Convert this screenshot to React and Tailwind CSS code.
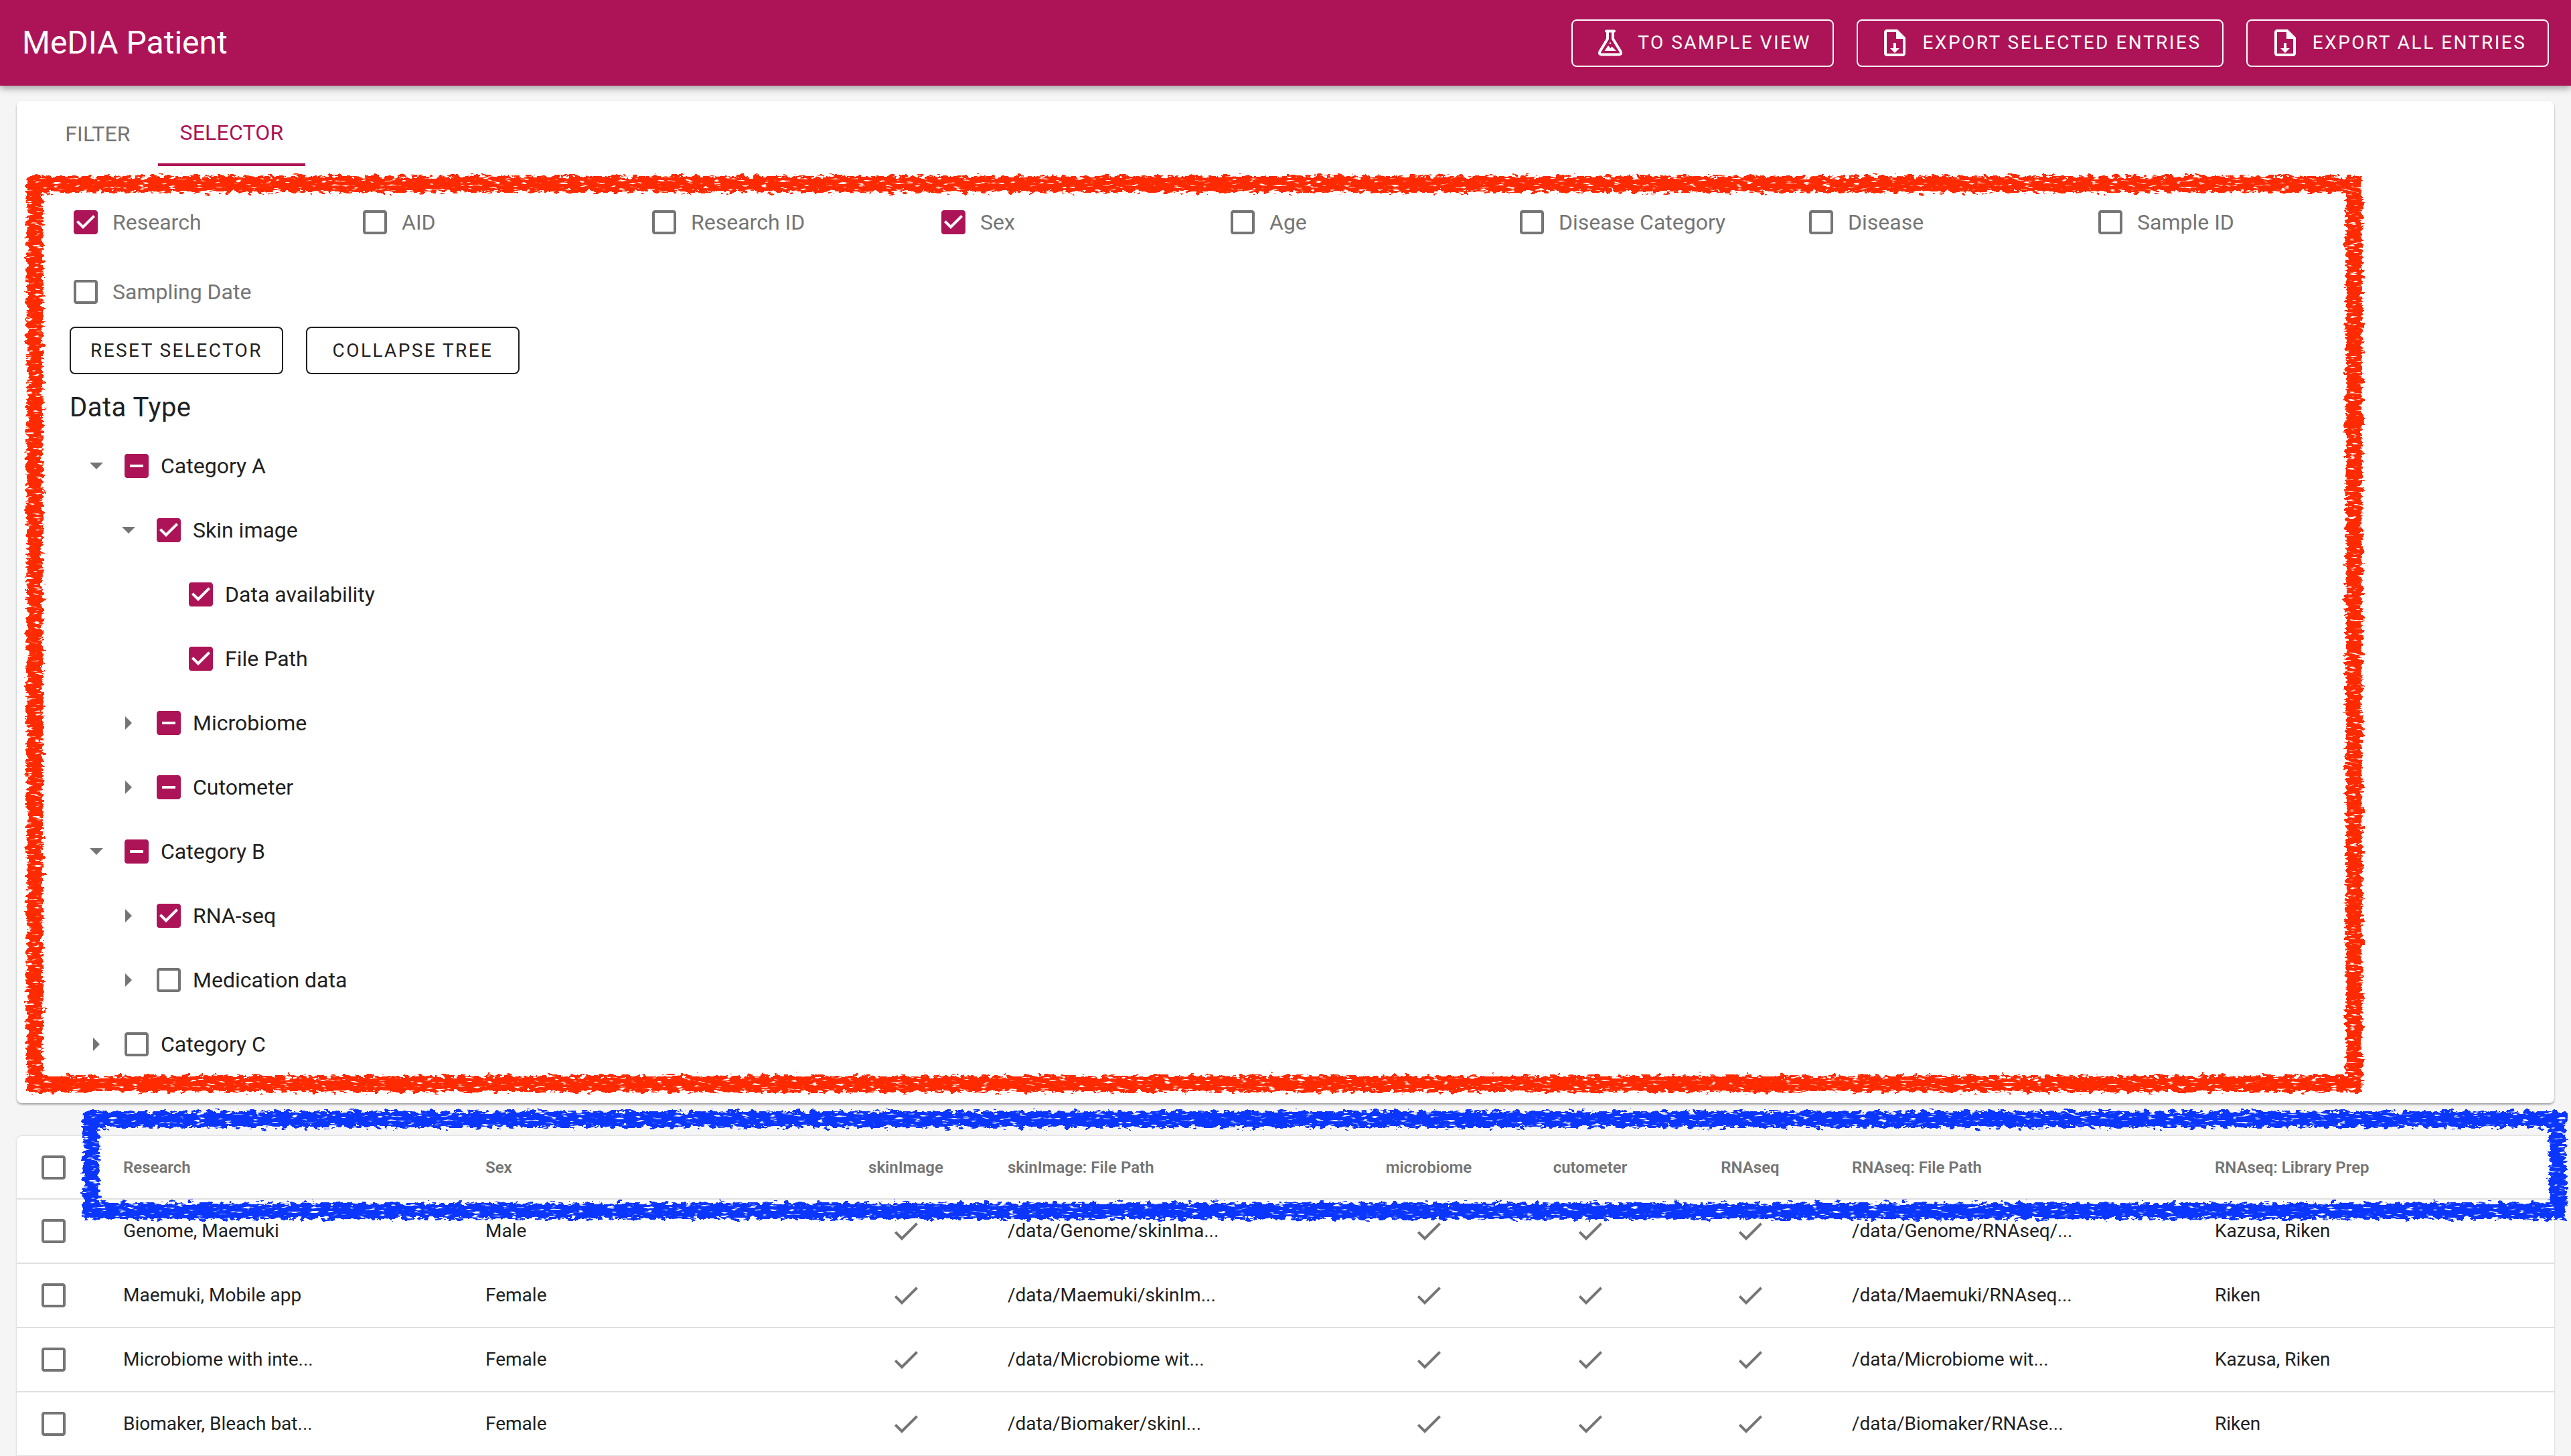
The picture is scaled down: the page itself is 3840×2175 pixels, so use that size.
import React from 'react';

const crimson = 'text-[#ad1457]';

const selectorFields = [
  { label: 'Research', checked: true },
  { label: 'AID' },
  { label: 'Research ID' },
  { label: 'Sex', checked: true },
  { label: 'Age' },
  { label: 'Disease Category' },
  { label: 'Disease' },
  { label: 'Sample ID' },
  { label: 'Sampling Date' },
];

const treeRows = [
  { label: 'Category A', depth: 0, arrow: 'down', state: 'some' },
  { label: 'Skin image', depth: 1, arrow: 'down', state: 'all' },
  { label: 'Data availability', depth: 2, state: 'all' },
  { label: 'File Path', depth: 2, state: 'all' },
  { label: 'Microbiome', depth: 1, arrow: 'right', state: 'some' },
  { label: 'Cutometer', depth: 1, arrow: 'right', state: 'some' },
  { label: 'Category B', depth: 0, arrow: 'down', state: 'some' },
  { label: 'RNA-seq', depth: 1, arrow: 'right', state: 'all' },
  { label: 'Medication data', depth: 1, arrow: 'right', state: 'none' },
  { label: 'Category C', depth: 0, arrow: 'right', state: 'none' },
];

const tableRows = [
  ['Genome, Maemuki', 'Male', '/data/Genome/skinIma...', '/data/Genome/RNAseq/...', 'Kazusa, Riken'],
  ['Maemuki, Mobile app', 'Female', '/data/Maemuki/skinIm...', '/data/Maemuki/RNAseq...', 'Riken'],
  ['Microbiome with inte...', 'Female', '/data/Microbiome wit...', '/data/Microbiome wit...', 'Kazusa, Riken'],
  ['Biomaker, Bleach bat...', 'Female', '/data/Biomaker/skinI...', '/data/Biomaker/RNAse...', 'Riken'],
];

const gridCols = 'grid grid-cols-[159px_541px_508px_240px_551px_220px_262px_216px_586px_507px] items-center';

const Box = ({ state = 'none' }) => {
  if (state === 'none') {
    return (
      <svg viewBox="0 0 24 24" className="w-12 h-12 shrink-0 fill-[#757575]">
        <path d="M19 5v14H5V5h14m0-2H5c-1.1 0-2 .9-2 2v14c0 1.1.9 2 2 2h14c1.1 0 2-.9 2-2V5c0-1.1-.9-2-2-2z" />
      </svg>
    );
  }
  return (
    <svg viewBox="0 0 24 24" className="w-12 h-12 shrink-0 fill-[#ad1457]">
      {state === 'all' ? (
        <path d="M19 3H5c-1.11 0-2 .9-2 2v14c0 1.1.89 2 2 2h14c1.11 0 2-.9 2-2V5c0-1.1-.89-2-2-2zm-9 14l-5-5 1.41-1.41L10 14.17l7.59-7.59L19 8l-9 9z" />
      ) : (
        <path d="M19 3H5c-1.1 0-2 .9-2 2v14c0 1.1.9 2 2 2h14c1.1 0 2-.9 2-2V5c0-1.1-.9-2-2-2zm-2 10H7v-2h10v2z" />
      )}
    </svg>
  );
};

const FlaskIcon = () => (
  <svg viewBox="0 0 48 48" className="w-12 h-12">
    <path
      d="M18 6.5H30M28 7V18L39.5 37Q41.5 41.5 37 41.5H11Q6.5 41.5 8.5 37L20 18V7"
      fill="none"
      stroke="white"
      strokeWidth="4"
      strokeLinecap="round"
      strokeLinejoin="round"
    />
    <path d="M15.5 36 21 28 24.5 32 26.5 29.5 33 36z" fill="white" />
    <circle cx="24" cy="24.5" r="1.2" fill="white" />
  </svg>
);

const FileDownIcon = () => (
  <svg viewBox="0 0 24 24" className="w-12 h-12 fill-white">
    <path d="M14 2H6c-1.1 0-2 .9-2 2v16c0 1.1.9 2 2 2h12c1.1 0 2-.9 2-2V8l-6-6zm4 18H6V4h7v5h5v11zm-5-8v4h2.5L12 19.5 8.5 16H11v-4h2z" />
  </svg>
);

const HeaderButton = ({ icon, label, width }) => (
  <button className={`${width} h-[71px] flex items-center justify-center gap-[17px] border-2 border-white rounded-lg text-white text-[28px] tracking-[2.5px]`}>
    {icon}
    {label}
  </button>
);

const OutlineButton = ({ label }) => (
  <button className="w-[319px] h-[71px] flex items-center justify-center border-2 border-[#212121] rounded-lg text-[#212121] text-[28px] tracking-[2.4px]">
    {label}
  </button>
);

const TreeRow = ({ label, depth, arrow, state }) => (
  <div className="h-24 flex items-center" style={{ paddingLeft: depth * 48 }}>
    <div className="w-12 flex justify-center">
      {arrow === 'down' && <div className="w-0 h-0 border-x-[10px] border-x-transparent border-t-[10px] border-t-[#757575]" />}
      {arrow === 'right' && <div className="w-0 h-0 border-y-[10px] border-y-transparent border-l-[10px] border-l-[#757575]" />}
    </div>
    <div className="w-[72px] flex justify-center">
      <Box state={state} />
    </div>
    <span className="text-[32px] text-[#212121]">{label}</span>
  </div>
);

const CheckMark = () => (
  <svg viewBox="0 0 24 24" className="w-12 h-12 mx-auto fill-[#757575]">
    <path d="M9 16.17 4.83 12l-1.42 1.41L9 19 21 7l-1.41-1.41z" />
  </svg>
);

// hand-drawn marker frame that sits over the screenshot
const Marker = ({ className, color, id, w, h }) => (
  <svg className={`absolute pointer-events-none ${className}`} width={w} height={h} viewBox={`0 0 ${w} ${h}`}>
    <defs>
      <filter id={id} filterUnits="userSpaceOnUse" x="0" y="0" width={w} height={h} colorInterpolationFilters="sRGB">
        <feTurbulence type="fractalNoise" baseFrequency="0.1 0.2" numOctaves="3" seed="4" result="wobble" />
        <feDisplacementMap in="SourceGraphic" in2="wobble" scale="16" result="rough" />
        <feTurbulence type="fractalNoise" baseFrequency="0.07 0.3" numOctaves="2" seed="9" result="grain" />
        <feColorMatrix in="grain" type="matrix" values="0 0 0 0 0  0 0 0 0 0  0 0 0 0 0  0 0 0 -9 6.8" result="holes" />
        <feComposite in="rough" in2="holes" operator="in" />
      </filter>
    </defs>
    <rect x="16" y="16" width={w - 32} height={h - 32} fill="none" stroke={color} strokeWidth="24" filter={`url(#${id})`} />
  </svg>
);

export default function App() {
  return (
    <div className="relative w-[3840px] h-[2175px] overflow-hidden bg-[#f5f5f5] font-['Roboto',sans-serif]">
      <header className="relative z-10 h-32 bg-[#ad1457] flex items-center justify-between pl-[33px] pr-[33px] shadow-[0_4px_10px_rgba(0,0,0,0.35)]">
        <h1 className="text-white text-[48px]">MeDIA Patient</h1>
        <div className="flex gap-[34px]">
          <HeaderButton icon={<FlaskIcon />} label="TO SAMPLE VIEW" width="w-[392px]" />
          <HeaderButton icon={<FileDownIcon />} label="EXPORT SELECTED ENTRIES" width="w-[548px]" />
          <HeaderButton icon={<FileDownIcon />} label="EXPORT ALL ENTRIES" width="w-[452px]" />
        </div>
      </header>

      <main className="pl-[25px] pr-[25px] pt-[23px]">
        <section className="h-[1497px] bg-white rounded-lg shadow-[0_2px_3px_rgba(0,0,0,0.35)]">
          <div className="pl-[31px] flex h-[97px]">
            <div className="w-[180px] flex items-center justify-center text-[32px] tracking-[0.2px] text-[#757575]">FILTER</div>
            <div className={`w-[220px] flex items-center justify-center text-[32px] tracking-[0.2px] border-b-4 border-[#ad1457] ${crimson}`}>SELECTOR</div>
          </div>

          <div className="pl-[79px] pt-[60px] grid grid-cols-[repeat(8,432px)] gap-y-[56px]">
            {selectorFields.map((f) => (
              <label key={f.label} className="h-12 flex items-center gap-4 text-[32px] text-[#757575]">
                <Box state={f.checked ? 'all' : 'none'} />
                {f.label}
              </label>
            ))}
          </div>

          <div className="pl-[79px] pt-[28px] flex gap-[34px]">
            <OutlineButton label="RESET SELECTOR" />
            <OutlineButton label="COLLAPSE TREE" />
          </div>

          <h2 className="pl-[79px] pt-[20px] h-[96px] text-[40px] tracking-[0.5px] text-[#212121]">Data Type</h2>

          <div className="pl-[95px] -mt-[7px]">
            {treeRows.map((r) => (
              <TreeRow key={r.label} {...r} />
            ))}
          </div>
        </section>

        <section className="mt-[49px] bg-white rounded-t-lg shadow-[0_0_3px_rgba(0,0,0,0.2)]">
          <div className={`${gridCols} h-[95px] border-b-2 border-[#e0e0e0] text-[24px] font-semibold text-[#757575]`}>
            <div className="pl-[31px]"><Box /></div>
            <div>Research</div>
            <div>Sex</div>
            <div className="text-center">skinImage</div>
            <div className="pl-[32px]">skinImage: File Path</div>
            <div className="text-center">microbiome</div>
            <div className="text-center">cutometer</div>
            <div className="text-center">RNAseq</div>
            <div className="pl-[44px]">RNAseq: File Path</div>
            <div>RNAseq: Library Prep</div>
          </div>
          {tableRows.map((row) => (
            <div key={row[0]} className={`${gridCols} h-24 border-b-2 border-[#e0e0e0] text-[28px] text-[#212121]`}>
              <div className="pl-[31px]"><Box /></div>
              <div>{row[0]}</div>
              <div>{row[1]}</div>
              <CheckMark />
              <div className="pl-[32px]">{row[2]}</div>
              <CheckMark />
              <CheckMark />
              <CheckMark />
              <div className="pl-[44px]">{row[3]}</div>
              <div>{row[4]}</div>
            </div>
          ))}
        </section>
      </main>

      <Marker id="redMark" color="#ff2a00" className="left-[36px] top-[259px]" w={3496} h={1376} />
      <Marker id="blueMark" color="#0a36ff" className="left-[120px] top-[1656px]" w={3716} h={169} />
    </div>
  );
}
